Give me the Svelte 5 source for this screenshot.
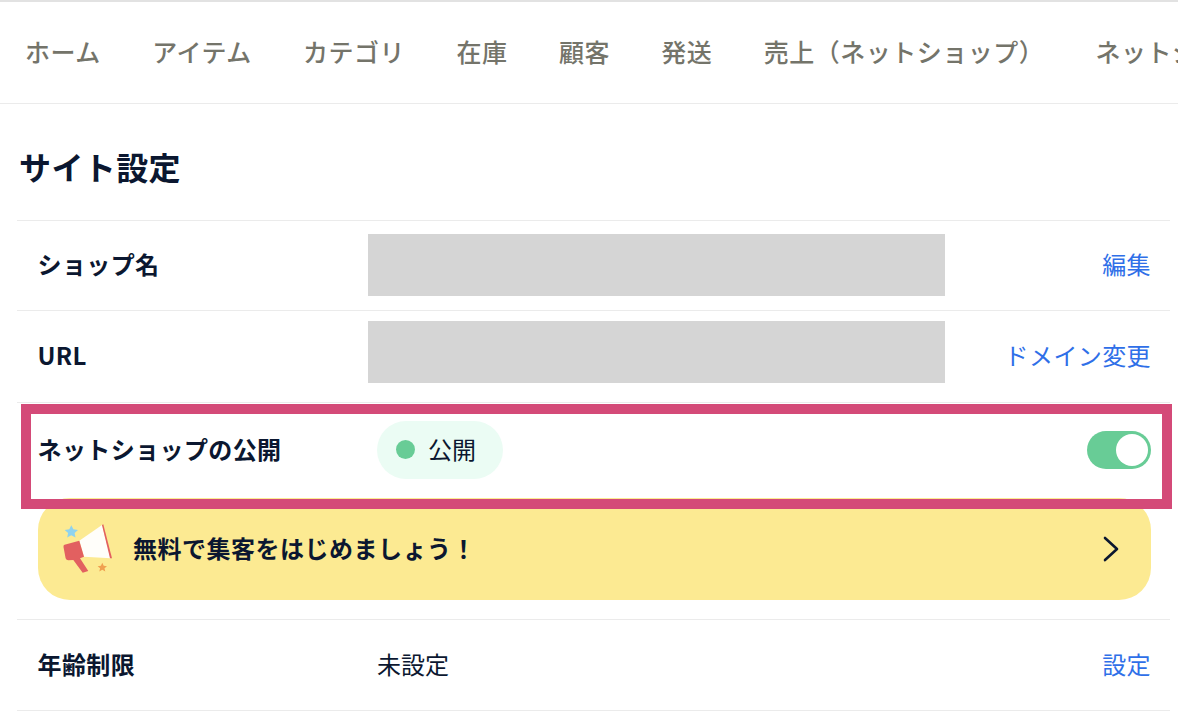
<script>
  const nav = ['ホーム','アイテム','カテゴリ','在庫','顧客','発送','売上\uFF08ネットショップ\uFF09','ネットショップ'];
  const bannerText = '無料で集客をはじめましょう\uFF01';
</script>

<div class="page">
  <nav class="nav">
    {#each nav as item}<span class="nav-item">{item}</span>{/each}
  </nav>
  <h1 class="title">サイト設定</h1>
  <section class="list">
    <div class="row r1">
      <div class="label">ショップ名</div>
      <div class="mask"></div>
      <a class="action">編集</a>
    </div>
    <div class="row r2">
      <div class="label">URL</div>
      <div class="mask"></div>
      <a class="action">ドメイン変更</a>
    </div>
    <div class="publish">
      <div class="row r3">
        <div class="label">ネットショップの公開</div>
        <div class="value"><span class="badge"><i class="dot"></i>公開</span></div>
        <span class="toggle"><i class="knob"></i></span>
      </div>
      <div class="banner">
        <svg class="mega" width="52" height="52" viewBox="0 -1 52 52">
          <path d="M9.300 1.200l2.100 4.100 4.600.6-3.400 3.100.9 4.600-4.200-2.300-4.100 2.300.9-4.600-3.400-3.100 4.600-.6z" fill="#8fd3ee"/>
          <path d="M17.300 16.700L40 1l8.700 33.300-26.700-1.600z" fill="#fffefa"/>
          <path d="M40 1l1.300-.7L50 34.300l-2 0z" fill="#e26060"/>
          <path d="M2.500 20.800L17.300 16.700 22 32.700l-4 1.600L26.300 47l-5.600 1.700L11.300 36l-5 .300q-2 0-2.700-2L1.500 23q-.3-1.700 1-2.200z" fill="#e26060"/>
          <path d="M40.300 38.800l1.400 3 3.300.4-2.500 2.100.8 3.200-3-1.700-3 1.700.8-3.200-2.500-2.100 3.300-.4z" fill="#f0a050"/>
        </svg>
        <span class="banner-text">{bannerText}</span>
        <svg class="chev" width="16" height="26" viewBox="0 0 16 26"><path d="M2 2l12 11L2 24" fill="none" stroke="#0b1730" stroke-width="2.600" stroke-linecap="round" stroke-linejoin="round"/></svg>
      </div>
      <div class="frame"></div>
    </div>
    <div class="row r4">
      <div class="label">年齢制限</div>
      <div class="value">未設定</div>
      <a class="action">設定</a>
    </div>
  </section>
</div>

<style>
  :global(body) { margin: 0; background: #fff; }
  .page {
    width: 1178px; height: 722px; overflow: hidden; box-sizing: border-box;
    border-top: 2px solid #e2e2e2; background: #fff; color: #0b1730;
    font-family: "Noto Sans CJK JP", "Noto Sans", sans-serif;
  }
  .nav {
    display: flex; gap: 51.400px; align-items: center; height: 102px; box-sizing: border-box;
    padding: 0 0 2px 25px; border-bottom: 1px solid #ebebeb; white-space: nowrap; overflow: hidden;
  }
  .nav-item { font-size: 25px; font-weight: 500; color: #74746a; line-height: 1; flex: none; letter-spacing: .5px; }
  .title { margin: 0; padding: 8px 0 0 19px; box-sizing: border-box; height: 116px; display: flex; align-items: center; font-size: 32px; font-weight: 700; line-height: 1; letter-spacing: .4px; }
  .list { margin: 0 8px 0 17px; border-top: 1px solid #ebebeb; }
  .row { display: flex; align-items: center; padding: 0 19px 0 20.500px; box-sizing: border-box; border-bottom: 1px solid #ebebeb; }
  .r1 { height: 90px; }
  .r2 { height: 92px; }
  .r3 { height: 95px; border-bottom: 0; }
  .r4 { height: 91px; }
  .label { width: 330.500px; flex: none; font-size: 24px; font-weight: 700; line-height: 1; letter-spacing: .4px; margin-bottom: 4px; }
  .mask { width: 577px; height: 62px; background: #d5d5d5; flex: none; align-self: flex-start; }
  .r1 .mask { margin-top: 13px; }
  .r2 .mask { margin-top: 10px; }
  .action { margin-left: auto; font-size: 24px; color: #2f6fe8; line-height: 1; letter-spacing: .4px; margin-bottom: 4px; }
  .value { padding-left: 9px; font-size: 24px; line-height: 1; margin-bottom: 2px; }
  .r4 .label, .r4 .action { margin-bottom: 2px; }
  .badge { display: inline-flex; align-items: center; gap: 13px; height: 58px; width: 126px; box-sizing: border-box; padding-left: 19px; padding-bottom: 1px; border-radius: 29px; background: #ebfcf4; }
  .dot { width: 19px; height: 19px; border-radius: 50%; background: #68cc96; }
  .publish { position: relative; padding-bottom: 19px; border-bottom: 1px solid #ebebeb; }
  .toggle { margin-left: auto; width: 64px; height: 38px; margin-bottom: 1px; border-radius: 19px; background: #68cc96; position: relative; }
  .knob { position: absolute; right: 3px; top: 3px; width: 32px; height: 32px; border-radius: 50%; background: #fff; }
  .banner { margin: 0 19px 0 21px; height: 102px; border-radius: 32px; background: #fcea92; display: flex; align-items: center; padding: 0 32px 0 24px; box-sizing: border-box; }
  .mega { flex: none; }
  .banner-text { margin: 0 0 2px 19px; font-size: 24px; font-weight: 700; letter-spacing: .5px; line-height: 1; }
  .chev { margin-left: auto; }
  .frame { position: absolute; left: 4px; right: -2px; top: 1px; height: 105px; box-sizing: border-box; border: 10px solid #d44a78; pointer-events: none; }
</style>
